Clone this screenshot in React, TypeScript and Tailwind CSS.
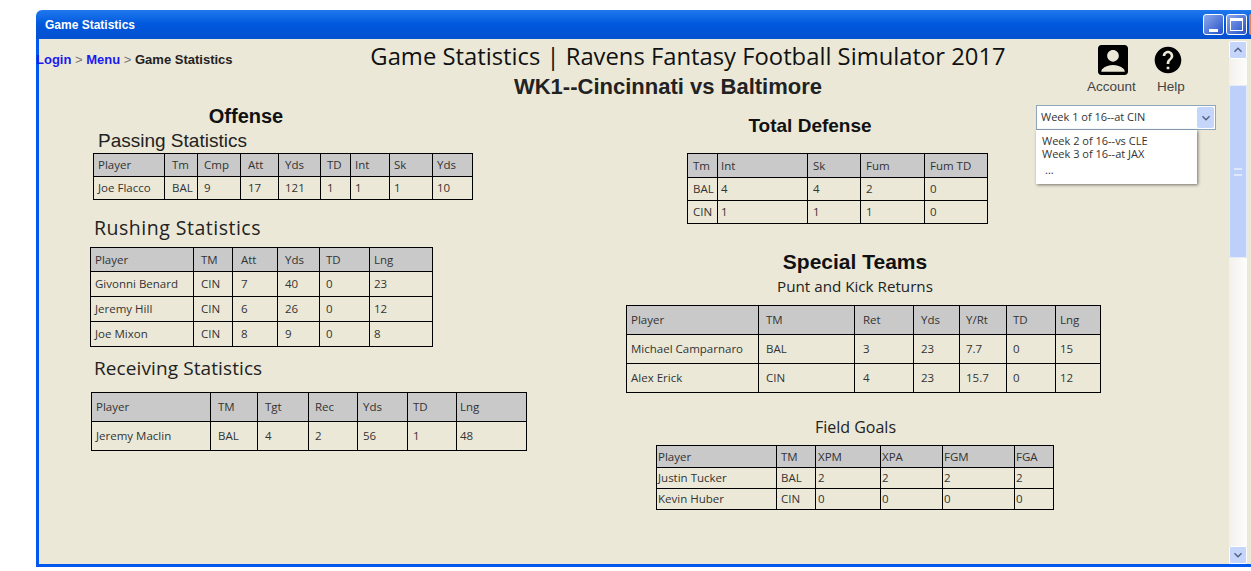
import { type FC } from 'react'
import { MdAccountBox, MdHelp, MdExpandLess, MdExpandMore } from 'react-icons/md'

type Column = { label: string; cell: string }

const StatTable: FC<{ columns: Column[]; rows: string[][]; width: string; header: string; row: string; className?: string }> = ({ columns, rows, width, header, row, className }) => (
  <table className={`table-fixed border-collapse font-['Open_Sans',sans-serif] text-[11.5px] text-[#333] ${width} ${className ?? ''}`}>
    <thead>
      <tr className={`bg-[#c9c9c9] ${header}`}>
        {columns.map(col => (
          <th key={col.label} className={`border border-black text-left font-normal ${col.cell}`}>{col.label}</th>
        ))}
      </tr>
    </thead>
    <tbody>
      {rows.map(cells => (
        <tr key={cells[0]} className={row}>
          {cells.map((cell, i) => (
            <td key={i} className={`border border-black ${columns[i].cell}`}>{cell}</td>
          ))}
        </tr>
      ))}
    </tbody>
  </table>
)

const passing: Column[] = [
  { label: 'Player', cell: 'w-[71px] pl-[4px]' },
  { label: 'Tm', cell: 'w-[33px] pl-[7px]' },
  { label: 'Cmp', cell: 'w-[43px] pl-[6px]' },
  { label: 'Att', cell: 'w-[38px] pl-[7px]' },
  { label: 'Yds', cell: 'w-[42px] pl-[6px]' },
  { label: 'TD', cell: 'w-[30px] pl-[6px]' },
  { label: 'Int', cell: 'w-[39px] pl-[4px]' },
  { label: 'Sk', cell: 'w-[43px] pl-[4px]' },
  { label: 'Yds ', cell: 'w-[40px] pl-[4px]' },
]

const rushing: Column[] = [
  { label: 'Player', cell: 'w-[103px] pl-[4px]' },
  { label: 'TM', cell: 'w-[39px] pl-[7px]' },
  { label: 'Att', cell: 'w-[45px] pl-[8px]' },
  { label: 'Yds', cell: 'w-[42px] pl-[7px]' },
  { label: 'TD', cell: 'w-[50px] pl-[6px]' },
  { label: 'Lng', cell: 'w-[63px] pl-[4px]' },
]

const receiving: Column[] = [
  { label: 'Player', cell: 'w-[119px] pl-[4px]' },
  { label: 'TM', cell: 'w-[47px] pl-[7px]' },
  { label: 'Tgt', cell: 'w-[51px] pl-[7px]' },
  { label: 'Rec', cell: 'w-[49px] pl-[6px]' },
  { label: 'Yds', cell: 'w-[50px] pl-[5px]' },
  { label: 'TD', cell: 'w-[49px] pl-[5px]' },
  { label: 'Lng', cell: 'w-[70px] pl-[3px]' },
]

const defense: Column[] = [
  { label: 'Tm', cell: 'w-[30px] pl-[5px]' },
  { label: 'Int', cell: 'w-[90px] pl-[3px]' },
  { label: 'Sk', cell: 'w-[53px] pl-[5px]' },
  { label: 'Fum', cell: 'w-[64px] pl-[5px]' },
  { label: 'Fum TD', cell: 'w-[63px] pl-[5px]' },
]

const returns: Column[] = [
  { label: 'Player', cell: 'w-[132px] pl-[4px]' },
  { label: 'TM', cell: 'w-[96px] pl-[7px]' },
  { label: 'Ret', cell: 'w-[59px] pl-[8px]' },
  { label: 'Yds', cell: 'w-[46px] pl-[7px]' },
  { label: 'Y/Rt', cell: 'w-[47px] pl-[6px]' },
  { label: 'TD', cell: 'w-[49px] pl-[6px]' },
  { label: 'Lng', cell: 'w-[45px] pl-[4px]' },
]

const fieldGoals: Column[] = [
  { label: 'Player', cell: 'w-[120px] pl-[1px]' },
  { label: 'TM', cell: 'w-[39px] pl-[4px]' },
  { label: 'XPM', cell: 'w-[65px] pl-[2px]' },
  { label: 'XPA', cell: 'w-[62px] pl-[1px]' },
  { label: 'FGM', cell: 'w-[72px] pl-[1px]' },
  { label: 'FGA', cell: 'w-[39px] pl-[1px]' },
]

const WindowButton: FC<{ kind: 'min' | 'max' }> = ({ kind }) => (
  <div className="flex h-[21px] w-[21px] items-center justify-center rounded-[3px] border border-white bg-gradient-to-br from-[#8fa8ea] to-[#2350c8]">
    {kind === 'min' ? (
      <div className="mt-[11px] h-[3px] w-[9px] bg-white" />
    ) : (
      <div className="h-[13px] w-[13px] border border-t-[3px] border-white" />
    )}
  </div>
)

const ScrollBar: FC = () => (
  <div className="flex h-full w-[18px] flex-col">
    <div className="flex h-[18px] items-center justify-center rounded-[2px] border border-white bg-[#c6d6fb] text-[#4d6185]">
      <MdExpandLess size={16} />
    </div>
    <div className="h-[26px] bg-gradient-to-r from-[#f3f1ec] to-[#fdfdfb]" />
    <div className="flex h-[173px] items-center justify-center rounded-[2px] border border-[#e3ebfd] bg-[#bdd0fa]">
      <div className="h-[8px] w-[8px] border-y-2 border-[#dfe8fd]" />
    </div>
    <div className="flex-1 bg-gradient-to-r from-[#f3f1ec] to-[#fdfdfb]" />
    <div className="flex h-[18px] items-center justify-center rounded-[2px] border border-white bg-[#c6d6fb] text-[#4d6185]">
      <MdExpandMore size={16} />
    </div>
  </div>
)

export default function App() {
  return (
    <div className="h-[571px] w-[1251px] overflow-hidden bg-white pl-[36px] pt-[10px]">
      <div className="flex h-[557px] flex-col">
        <div className="flex h-[29px] items-center rounded-tl-[6px] bg-gradient-to-b from-[#1f78ee] via-[#0058dc] to-[#0450d0] pl-[9px] font-['Liberation_Sans',sans-serif] text-[12px] font-bold text-white">
          <span className="flex-1">Game Statistics</span>
          <div className="flex gap-[2px]">
            <WindowButton kind="min" />
            <WindowButton kind="max" />
            <div className="h-[21px] w-[2px] rounded-l-[2px] bg-[#e8835a]" />
          </div>
        </div>
        <div className="relative flex min-h-0 flex-1 border-b-[3px] border-l-[3px] border-[#0058ee] bg-[#ebe8d8] font-['Liberation_Sans',sans-serif]">
          <main className="min-w-0 flex-1 pt-[2px]">
            <header className="flex h-[64px]">
              <nav className="ml-[-3px] mt-[9px] w-[332px] text-[13px] font-bold text-[#222]">
                <a className="text-[#1a1aee]">Login</a>
                <span className="font-normal text-[#777]"> &gt; </span>
                <a className="text-[#1a1aee]">Menu</a>
                <span className="font-normal text-[#777]"> &gt; </span>
                Game Statistics
              </nav>
              <div className="w-[640px] text-center">
                <h1 className="whitespace-nowrap font-['Open_Sans',sans-serif] text-[23.8px] leading-[30px] text-[#111]">Game Statistics | Ravens Fantasy Football Simulator 2017</h1>
                <h2 className="mt-[1px] pr-[40px] text-[22px] font-bold leading-[30px] text-[#222]">WK1--Cincinnati vs Baltimore</h2>
              </div>
              <div className="ml-[79px] flex gap-[16px] text-[13.5px] text-[#444]">
                <div className="flex flex-col items-center">
                  <MdAccountBox size={40} className="ml-[4px] mt-[-1px] text-black" />
                  <span className="mt-[-3px]">Account</span>
                </div>
                <div className="flex flex-col items-center">
                  <MdHelp size={32} className="mr-[6px] mt-[3px] text-black" />
                  <span className="mt-[1px]">Help</span>
                </div>
              </div>
            </header>
            <div className="flex">
              <section className="ml-[51px] w-[536px]">
                <h3 className="mt-[-1px] w-[312px] text-center text-[20px] font-bold leading-[24px] text-[#111]">Offense</h3>
                <h4 className="ml-[8px] mt-[2px] text-[19px] leading-[22px] text-[#222]">Passing Statistics</h4>
                <StatTable className="ml-[3px] mt-[1px]" width="w-[379px]" header="h-[23px]" row="h-[23px]" columns={passing} rows={[['Joe Flacco', 'BAL', '9', '17', '121', '1', '1', '1', '10']]} />
                <h4 className="ml-[4px] mt-[16px] font-['Open_Sans',sans-serif] text-[19.5px] leading-[24px] tracking-[0.5px] text-[#222]">Rushing Statistics</h4>
                <StatTable className="mt-[7px]" width="w-[342px]" header="h-[24px]" row="h-[25px]" columns={rushing} rows={[
                  ['Givonni Benard', 'CIN', '7', '40', '0', '23'],
                  ['Jeremy Hill', 'CIN', '6', '26', '0', '12'],
                  ['Joe Mixon', 'CIN', '8', '9', '0', '8'],
                ]} />
                <h4 className="ml-[4px] mt-[9px] font-['Open_Sans',sans-serif] text-[19px] leading-[24px] tracking-[0.1px] text-[#222]">Receiving Statistics</h4>
                <StatTable className="ml-[1px] mt-[12px]" width="w-[435px]" header="h-[29px]" row="h-[29px]" columns={receiving} rows={[['Jeremy Maclin', 'BAL', '4', '2', '56', '1', '48']]} />
              </section>
              <section>
                <h3 className="ml-[34px] mt-[9px] w-[300px] text-center text-[19px] font-bold leading-[24px] text-[#111]">Total Defense</h3>
                <StatTable className="ml-[61px] mt-[15px]" width="w-[300px]" header="h-[24px]" row="h-[23px]" columns={defense} rows={[
                  ['BAL', '4', '4', '2', '0'],
                  ['CIN', '1', '1', '1', '0'],
                ]} />
                <h3 className="mt-[25px] w-[458px] text-center text-[21px] font-bold leading-[26px] text-[#111]">Special Teams</h3>
                <h4 className="w-[458px] text-center font-['Open_Sans',sans-serif] text-[15.2px] leading-[22px] text-[#222]">Punt and Kick Returns</h4>
                <StatTable className="mt-[8px]" width="w-[474px]" header="h-[29px]" row="h-[29px]" columns={returns} rows={[
                  ['Michael Camparnaro', 'BAL', '3', '23', '7.7', '0', '15'],
                  ['Alex Erick', 'CIN', '4', '23', '15.7', '0', '12'],
                ]} />
                <h4 className="mt-[23px] w-[459px] text-center font-['Open_Sans',sans-serif] text-[16px] leading-[22px] text-[#222]">Field Goals</h4>
                <StatTable className="ml-[30px] mt-[7px]" width="w-[397px]" header="h-[22px]" row="h-[21px]" columns={fieldGoals} rows={[
                  ['Justin Tucker', 'BAL', '2', '2', '2', '2'],
                  ['Kevin Huber', 'CIN', '0', '0', '0', '0'],
                ]} />
              </section>
            </div>
          </main>
          <div className="mr-[4px] pt-[2px]">
            <ScrollBar />
          </div>
          <div className="absolute left-[997px] top-[66px] w-[180px] font-['Open_Sans',sans-serif] text-[11px] text-[#333]">
            <div className="flex h-[25px] items-center justify-between border border-[#8fa6bb] bg-white pl-[4px] pr-[1px]">
              <span>Week 1 of 16--at CIN</span>
              <div className="flex h-[21px] w-[17px] items-center justify-center rounded-[2px] bg-[#c6d6fb] text-[#4d6185]">
                <MdExpandMore size={16} />
              </div>
            </div>
            <div className="h-[54px] w-[161px] bg-white pl-[6px] pt-[4px] leading-[13px] shadow-[1px_1px_3px_rgba(0,0,0,0.5)]">
              <div>Week 2 of 16--vs CLE</div>
              <div>Week 3 of 16--at JAX</div>
              <div className="mt-[3px] pl-[3px]">...</div>
            </div>
          </div>
        </div>
      </div>
    </div>
  )
}
